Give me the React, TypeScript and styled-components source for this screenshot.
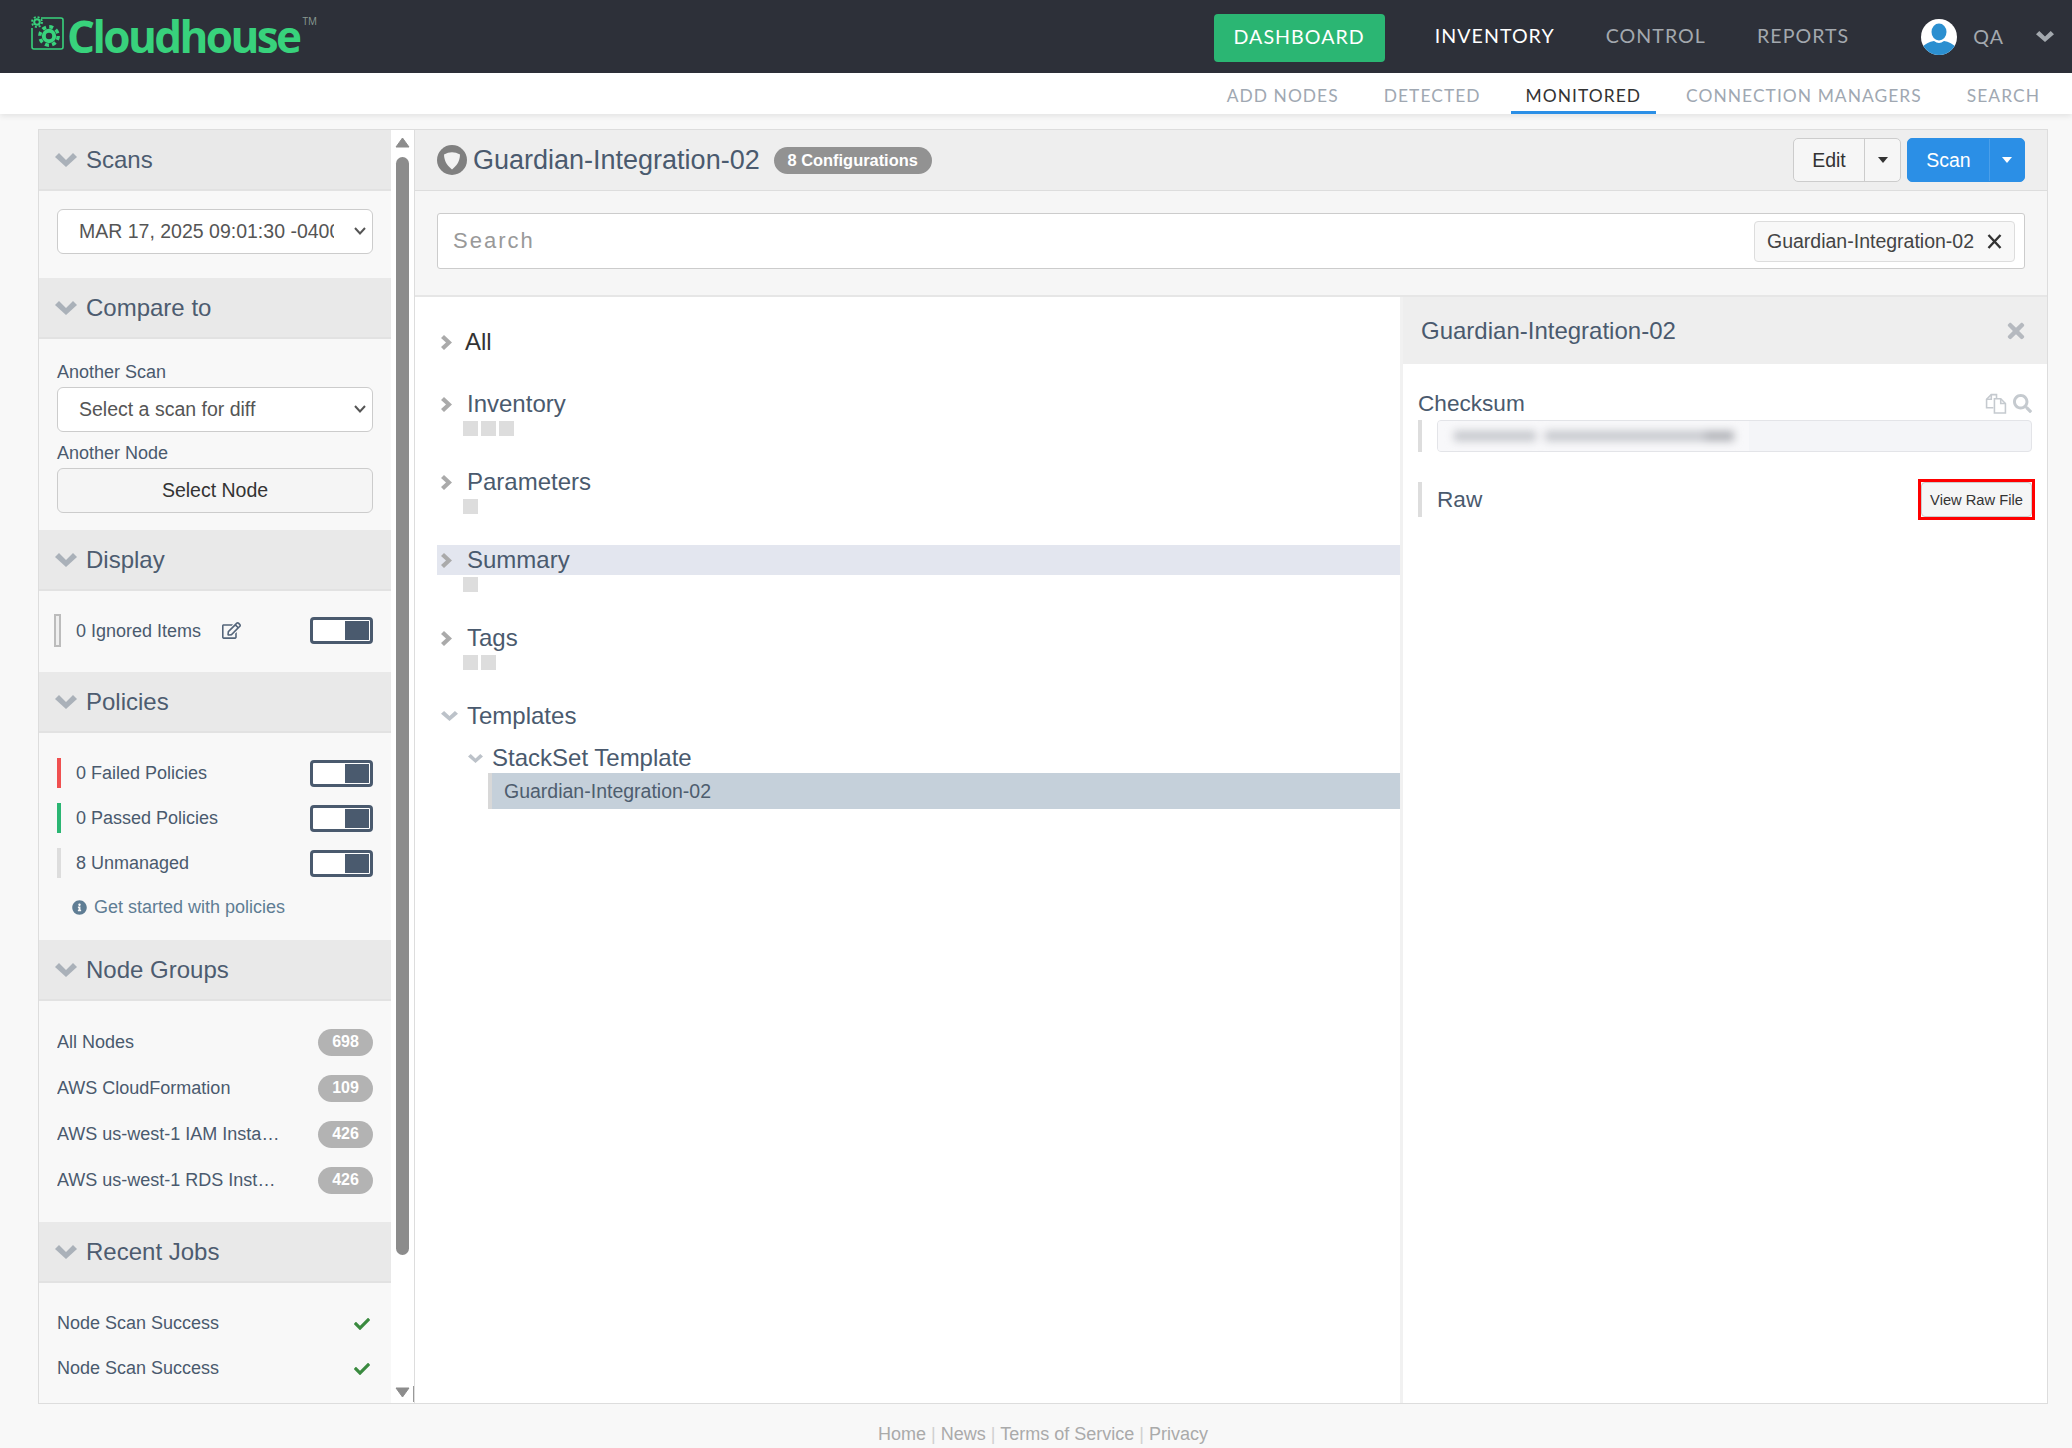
import React from 'react';
import styled, { createGlobalStyle } from 'styled-components';
import { FaCheck, FaTimes, FaRegEdit, FaInfoCircle, FaSearch } from 'react-icons/fa';

const Global = createGlobalStyle`
  html, body { margin: 0; padding: 0; background: #f8f8f8; overflow: hidden; }
  body { font-family: "Liberation Sans", Arial, sans-serif; color: #4a5a6e; }
  * { box-sizing: border-box; }
`;

const Page = styled.div`
  width: 2072px;
  height: 1448px;
  display: flex;
  flex-direction: column;
`;

const TopBar = styled.header`
  height: 73px;
  background: #2d3039;
  display: flex;
  align-items: center;
  padding: 0 18px 0 31px;
  flex: none;
`;

const Logo = styled.div`
  display: flex;
  align-items: flex-start;
  color: #38d27c;
  margin-top: -2px;
`;

const LogoWord = styled.span`
  font-family: "Open Sans", sans-serif;
  font-weight: 700;
  font-size: 44px;
  line-height: 46px;
  letter-spacing: -2.6px;
  margin-left: 3px;
`;

const LogoMark = styled.span`
  display: flex;
  margin-top: 3px;
`;

const LogoTm = styled.sup`
  font-family: "Open Sans", sans-serif;
  font-size: 10px;
  line-height: 12px;
  color: #8a9a92;
  margin: 2px 0 0 3px;
  vertical-align: baseline;
`;

const TopNav = styled.nav`
  margin-left: auto;
  display: flex;
  align-items: center;
  font-family: Lato, sans-serif;
  font-size: 19.6px;
  letter-spacing: 1.05px;
`;

const DashButton = styled.a`
  width: 171px;
  height: 48px;
  background: #2bb673;
  color: #fff;
  border-radius: 4px;
  display: flex;
  align-items: center;
  justify-content: center;
  margin: 2px 50px 0 0;
  padding-bottom: 2px;
`;

const TopLink = styled.a<{ $active?: boolean; $last?: boolean }>`
  color: ${p => (p.$active ? '#fff' : '#a3a8ae')};
  margin-right: ${p => (p.$last ? 0 : 51)}px;
  margin-bottom: 2px;
`;

const UserBox = styled.div`
  display: flex;
  align-items: center;
  margin-left: 72px;
  color: #a3a8ae;
`;

const UserName = styled.span`
  margin: 0 32px 0 16px;
`;

const SubBar = styled.div`
  height: 41px;
  background: #fff;
  box-shadow: 0 2px 6px rgba(0, 0, 0, 0.09);
  display: flex;
  justify-content: flex-end;
  gap: 15px;
  padding-right: 17px;
  flex: none;
  position: relative;
  font-family: Lato, sans-serif;
  font-size: 17.4px;
  letter-spacing: 1.05px;
`;

const SubTab = styled.a<{ $active?: boolean }>`
  padding: 0 15px;
  line-height: 46px;
  height: 41px;
  color: ${p => (p.$active ? '#333' : '#a0a8b2')};
  border-bottom: 3px solid ${p => (p.$active ? '#2b8fe6' : 'transparent')};
`;

const Frame = styled.div`
  margin: 15px 0 0 38px;
  width: 2010px;
  height: 1275px;
  border: 1px solid #ddd;
  display: flex;
  flex: none;
`;

const Sidebar = styled.aside`
  width: 352px;
  height: 100%;
  overflow: hidden;
  flex: none;
`;

const SectionHead = styled.div`
  height: 61px;
  background: #e9e9e9;
  border-bottom: 2px solid #e2e2e2;
  display: flex;
  align-items: center;
  padding-left: 16px;
  font-size: 24px;
  gap: 9px;
  color: #4d5c70;
`;

const SectionBody = styled.div<{ $top: number; $bottom?: number }>`
  padding: ${p => p.$top}px 18px ${p => p.$bottom || 0}px 18px;
`;

const SelectWrap = styled.div<{ $top?: number }>`
  position: relative;
  width: 316px;
  margin-top: ${p => p.$top || 0}px;
`;

const NativeSelect = styled.select`
  appearance: none;
  width: 316px;
  height: 45px;
  display: block;
  background: #fff;
  border: 1px solid #ccc;
  border-radius: 6px;
  padding: 0 38px 2px 21px;
  font-family: "Liberation Sans", Arial, sans-serif;
  font-size: 19.5px;
  color: #555;
  outline: none;
`;

const SelectArrow = styled.svg`
  position: absolute;
  right: 7px;
  top: 18px;
  pointer-events: none;
`;

const FieldLabel = styled.label<{ $top?: number }>`
  display: block;
  font-size: 18px;
  line-height: 24px;
  color: #4a5a6e;
  margin-top: ${p => p.$top || 0}px;
`;

const SelectNode = styled.button`
  display: block;
  width: 316px;
  height: 45px;
  margin-top: 3px;
  background: #f5f5f5;
  border: 1px solid #ccc;
  border-radius: 6px;
  font-family: "Liberation Sans", Arial, sans-serif;
  font-size: 19.5px;
  color: #333;
`;

const FilterRow = styled.div<{ $gap?: number }>`
  display: flex;
  align-items: center;
  height: 30px;
  margin-bottom: ${p => (p.$gap === undefined ? 15 : p.$gap)}px;
  font-size: 18px;
  color: #4a5a6e;
`;

const ColorBar = styled.span<{ $color: string }>`
  width: 4px;
  height: 30px;
  background: ${p => p.$color};
  margin-right: 15px;
  flex: none;
`;

const IgnoredRow = styled(FilterRow)`
  height: 33px;
  margin: 0 0 0 -3px;
`;

const IgnoredBar = styled.span`
  width: 7px;
  height: 33px;
  background: #efefef;
  border: 2px solid #bcbcbc;
  margin-right: 15px;
  flex: none;
`;

const IgnoredLabel = styled.span`
  margin-top: 1px;
`;

const EditIcon = styled(FaRegEdit)`
  margin-left: 21px;
  color: #54657a;
`;

const Toggle = styled.span`
  margin-left: auto;
  width: 63px;
  height: 27px;
  border: 3px solid #4a5a6e;
  border-radius: 4px;
  background: #fff;
  display: flex;
  justify-content: flex-end;
  padding: 1px;
  flex: none;
`;

const ToggleKnob = styled.span`
  width: 24px;
  height: 100%;
  background: #4a5a6e;
`;

const HelpLine = styled.div`
  display: flex;
  align-items: center;
  gap: 7px;
  margin: 17px 0 0 15px;
  height: 24px;
  font-size: 18px;
  color: #5f7d94;
`;

const GroupRow = styled.div`
  display: flex;
  align-items: center;
  justify-content: space-between;
  height: 46px;
  font-size: 18px;
  color: #4a5a6e;
`;

const GroupName = styled.span`
  display: block;
  width: 226px;
  white-space: nowrap;
  overflow: hidden;
  text-overflow: ellipsis;
`;

const CountBadge = styled.span`
  width: 55px;
  height: 27px;
  border-radius: 14px;
  background: #b3b3b3;
  color: #fff;
  font-weight: 700;
  font-size: 16px;
  display: flex;
  align-items: center;
  justify-content: center;
`;

const JobRow = styled.div`
  display: flex;
  align-items: center;
  justify-content: space-between;
  height: 45px;
  font-size: 18px;
  color: #4a5a6e;
  padding-right: 3px;
`;

const ScrollCol = styled.div`
  width: 23px;
  flex: none;
  background: #fff;
  display: flex;
  flex-direction: column;
  align-items: center;
  padding: 7px 0 5px;
  position: relative;
`;

const ScrollThumb = styled.div`
  width: 13px;
  margin: 9px 0 auto;
  height: 1098px;
  background: #8c8c8c;
  border-radius: 7px;
`;

const Tick = styled.span`
  position: absolute;
  right: 0;
  bottom: 1px;
  width: 1px;
  height: 16px;
  background: #999;
`;

const Content = styled.main`
  flex: 1;
  min-width: 0;
  border-left: 1px solid #ddd;
  display: flex;
  flex-direction: column;
  background: #fff;
`;

const ContentHead = styled.div`
  height: 61px;
  background: #eee;
  border-bottom: 1px solid #ddd;
  display: flex;
  align-items: center;
  padding: 0 22px;
  flex: none;
`;

const NodeTitle = styled.h1`
  margin: 0 0 0 6px;
  font-weight: 400;
  font-size: 27px;
  color: #4a5a6e;
`;

const ConfigBadge = styled.span`
  margin-left: 14px;
  height: 27px;
  width: 158px;
  border-radius: 14px;
  background: #929292;
  color: #fff;
  font-weight: 700;
  font-size: 16.4px;
  display: flex;
  align-items: center;
  justify-content: center;
`;

const ActionsGroup = styled.div`
  margin-left: auto;
  display: flex;
  gap: 6px;
`;

const SplitButton = styled.div<{ $primary?: boolean; $width: number; $main: number }>`
  width: ${p => p.$width}px;
  height: 44px;
  display: grid;
  grid-template-columns: ${p => p.$main}px 1fr;
  border-radius: 5px;
  overflow: hidden;
  font-size: 19.5px;
  background: ${p => (p.$primary ? '#2b8fe6' : '#f6f6f6')};
  color: ${p => (p.$primary ? '#fff' : '#333')};
  border: 1px solid ${p => (p.$primary ? '#2b8fe6' : '#ccc')};
`;

const SplitMain = styled.span`
  display: flex;
  align-items: center;
  justify-content: center;
`;

const SplitCaret = styled.span<{ $primary?: boolean }>`
  display: flex;
  align-items: center;
  justify-content: center;
  border-left: 1px solid ${p => (p.$primary ? '#4a9fea' : '#ccc')};
`;

const Caret = styled.span`
  width: 0;
  height: 0;
  border-left: 5px solid transparent;
  border-right: 5px solid transparent;
  border-top: 6px solid currentColor;
`;

const SearchArea = styled.div`
  height: 106px;
  background: #f6f6f6;
  border-bottom: 2px solid #e6e6e6;
  padding: 22px 22px 0;
  flex: none;
`;

const SearchBox = styled.div`
  height: 56px;
  background: #fff;
  border: 1px solid #ccc;
  border-radius: 3px;
  display: flex;
  align-items: center;
  padding: 0 9px 0 15px;
`;

const SearchPlaceholder = styled.span`
  font-size: 22px;
  letter-spacing: 2px;
  color: #999;
`;

const SearchTag = styled.span`
  margin-left: auto;
  width: 261px;
  height: 41px;
  background: #f8f8f8;
  border: 1px solid #ddd;
  border-radius: 4px;
  color: #444;
  font-size: 19.5px;
  display: flex;
  align-items: center;
  justify-content: space-between;
  padding: 0 12px;
`;

const Split = styled.div`
  flex: 1;
  display: flex;
  min-height: 0;
`;

const Tree = styled.div`
  width: 985px;
  flex: none;
  padding: 30px 0 0 22px;
`;

const TreeRow = styled.div<{ $hl?: boolean }>`
  height: 30px;
  display: flex;
  align-items: center;
  font-size: 24px;
  color: #4a5a6e;
  background: ${p => (p.$hl ? '#e3e6ef' : 'transparent')};
  padding-left: 4px;
`;

const AllRow = styled(TreeRow)`
  color: #333;
  margin-bottom: 32px;
`;

const TreeLabel = styled.span<{ $x: number }>`
  margin-left: ${p => p.$x}px;
`;

const TreeGroup = styled.div`
  margin-bottom: 31px;
`;

const Squares = styled.div`
  display: flex;
  gap: 3px;
  margin: 2px 0 0 26px;
`;

const Square = styled.span`
  width: 15px;
  height: 15px;
  background: #ddd;
`;

const SubRow = styled(TreeRow)`
  margin: 12px 0 0 27px;
`;

const SelectedRow = styled.div`
  margin-left: 51px;
  height: 36px;
  background: #c5d0da;
  border-left: 4px solid #d8d8d8;
  padding-left: 12px;
  display: flex;
  align-items: center;
  font-size: 19.5px;
  color: #4e5d6e;
`;

const Detail = styled.section`
  flex: 1;
  min-width: 0;
  border-left: 3px solid #f1f1f1;
`;

const DetailHead = styled.div`
  height: 67px;
  background: #eee;
  display: flex;
  align-items: center;
  justify-content: space-between;
  padding: 0 19px 0 18px;
  font-size: 24px;
  color: #4a5a6e;
`;

const DetailBody = styled.div`
  padding: 25px 15px 0;
`;

const CheckHead = styled.div`
  display: flex;
  align-items: center;
  height: 29px;
  font-size: 22.6px;
  color: #4a5a6e;
`;

const CheckIcons = styled.span`
  margin-left: auto;
  display: flex;
  align-items: center;
  gap: 6px;
  color: #c5cacf;
`;

const ValueRow = styled.div`
  margin-top: 2px;
  display: flex;
  border-left: 4px solid #ddd;
  padding-left: 15px;
  height: 32px;
`;

const ValueBox = styled.div`
  flex: 1;
  background: #f4f5f8;
  border: 1px solid #e3e4e8;
  border-radius: 4px;
  display: flex;
  overflow: hidden;
`;

const RedactedPatch = styled.div`
  width: 311px;
  background: #f8f8fa;
  display: flex;
  align-items: center;
  padding-left: 16px;
`;

const Redacted = styled.div`
  width: 292px;
  height: 10px;
  filter: blur(4px);
  background: linear-gradient(90deg, #c4c6cb 0 28%, transparent 28% 31%, #c4c6cb 31% 86%, #aeb0b5 86% 96%, transparent 96%);
`;

const RawRow = styled.div`
  margin-top: 30px;
  height: 35px;
  display: flex;
  align-items: center;
  justify-content: space-between;
  border-left: 4px solid #ddd;
  padding-left: 15px;
  font-size: 22.6px;
  color: #4a5a6e;
`;

const RawFrame = styled.div`
  border: 3px solid #f00;
  margin: -3px -3px -3px 0;
  display: flex;
`;

const RawButton = styled.button`
  width: 111px;
  height: 35px;
  padding: 0;
  background: #f5f5f5;
  border: 1px solid #ccc;
  border-radius: 4px;
  font-family: "Liberation Sans", Arial, sans-serif;
  font-size: 14.7px;
  color: #333;
`;

const Footer = styled.footer`
  margin-left: 38px;
  width: 2010px;
  text-align: center;
  font-size: 18px;
  line-height: 22px;
  padding-top: 19px;
  color: #aaa;
`;

const Pipe = styled.span`
  color: #d0d0d0;
`;

const LogoIcon = () => (
  <svg width="33" height="34" viewBox="0 0 33 34" fill="none">
    <path d="M10 2H30a2 2 0 0 1 2 2V31a2 2 0 0 1-2 2H3a2 2 0 0 1-2-2V12" stroke="#38d27c" strokeWidth="1.6" />
    <circle cx="6" cy="6" r="2.8" stroke="#38d27c" strokeWidth="2" />
    <circle cx="6" cy="6" r="5" stroke="#38d27c" strokeWidth="1.8" strokeDasharray="2 1.93" />
    <circle cx="18" cy="20" r="5.2" stroke="#38d27c" strokeWidth="4" />
    <circle cx="18" cy="20" r="9.2" stroke="#38d27c" strokeWidth="3.4" strokeDasharray="4 3.22" />
  </svg>
);

const NodeIcon = () => (
  <svg width="30" height="30" viewBox="0 0 30 30">
    <circle cx="15" cy="15" r="15" fill="#808080" />
    <path d="M7 9.5Q15 5 23 9.5C23 16 19.5 21 15 24.5C10.5 21 7 16 7 9.5Z" fill="#f2f2f2" />
  </svg>
);

const Avatar = () => (
  <svg width="36" height="36" viewBox="0 0 36 36">
    <defs>
      <clipPath id="avatar-clip"><circle cx="18" cy="18" r="18" /></clipPath>
    </defs>
    <g clipPath="url(#avatar-clip)">
      <rect width="36" height="36" fill="#fff" />
      <ellipse cx="18" cy="13" rx="7.5" ry="8.5" fill="#2b8fd0" />
      <path d="M0 36V29Q6 23 13 22Q18 26 23 22Q30 23 36 29V36Z" fill="#2b8fd0" />
    </g>
  </svg>
);

const CopyIcon = () => (
  <svg width="22" height="21" viewBox="0 0 21 20" fill="none" stroke="currentColor" strokeWidth="1.5">
    <path d="M8 14H1.5V6L6 1.5H11V5" />
    <path d="M6 1.5V6H1.5" />
    <path d="M9 5.5H15L19.5 10V19H9Z" />
    <path d="M15 5.5V10H19.5" />
  </svg>
);

const ChevronDown = ({ w, h, color }: { w: number; h: number; color: string }) => (
  <svg width={w} height={h} viewBox="0 0 22 14" fill={color} preserveAspectRatio="none">
    <path d="M0 4L4 0L11 7L18 0L22 4L11 14Z" />
  </svg>
);

const ChevronRight = () => (
  <svg width="11" height="15" viewBox="0 0 11 15" fill="#aaa">
    <path d="M0 3L3 0L11 7.5L3 15L0 12L5 7.5Z" />
  </svg>
);

const CloseThin = () => (
  <svg width="15" height="15" viewBox="0 0 15 15" stroke="#333" strokeWidth="2.4">
    <path d="M1.5 1L13.5 14M13.5 1L1.5 14" />
  </svg>
);

const Section = ({ title, children, top, bottom }: { title: string; children: React.ReactNode; top: number; bottom?: number }) => (
  <>
    <SectionHead>
      <ChevronDown w={22} h={14} color="#aab1b9" />
      {title}
    </SectionHead>
    <SectionBody $top={top} $bottom={bottom}>{children}</SectionBody>
  </>
);

const Switch = () => (
  <Toggle><ToggleKnob /></Toggle>
);

const Dropdown = ({ label, top }: { label: string; top?: number }) => (
  <SelectWrap $top={top}>
    <NativeSelect defaultValue="a">
      <option value="a">{label}</option>
    </NativeSelect>
    <SelectArrow width="12" height="8" viewBox="0 0 12 8" fill="none" stroke="#555" strokeWidth="2">
      <path d="M1 1L6 6.5L11 1" />
    </SelectArrow>
  </SelectWrap>
);

const treeGroups = [
  { name: 'Inventory', squares: 3 },
  { name: 'Parameters', squares: 1 },
  { name: 'Summary', squares: 1, hl: true },
  { name: 'Tags', squares: 2 },
];

const groups = [
  ['All Nodes', '698'],
  ['AWS CloudFormation', '109'],
  ['AWS us-west-1 IAM Instance Profiles', '426'],
  ['AWS us-west-1 RDS Instances', '426'],
];

export default function App() {
  return (
    <Page>
      <Global />
      <TopBar>
        <Logo>
          <LogoMark><LogoIcon /></LogoMark>
          <LogoWord>Cloudhouse</LogoWord>
          <LogoTm>TM</LogoTm>
        </Logo>
        <TopNav>
          <DashButton>DASHBOARD</DashButton>
          <TopLink $active>INVENTORY</TopLink>
          <TopLink>CONTROL</TopLink>
          <TopLink $last>REPORTS</TopLink>
          <UserBox>
            <Avatar />
            <UserName>QA</UserName>
            <ChevronDown w={18} h={11} color="#a3a8ae" />
          </UserBox>
        </TopNav>
      </TopBar>
      <SubBar>
        <SubTab>ADD NODES</SubTab>
        <SubTab>DETECTED</SubTab>
        <SubTab $active>MONITORED</SubTab>
        <SubTab>CONNECTION MANAGERS</SubTab>
        <SubTab>SEARCH</SubTab>
      </SubBar>
      <Frame>
        <Sidebar>
          <Section title="Scans" top={18} bottom={24}>
            <Dropdown label="MAR 17, 2025 09:01:30 -0400" />
          </Section>
          <Section title="Compare to" top={21} bottom={17}>
            <FieldLabel>Another Scan</FieldLabel>
            <Dropdown label="Select a scan for diff" top={3} />
            <FieldLabel $top={9}>Another Node</FieldLabel>
            <SelectNode>Select Node</SelectNode>
          </Section>
          <Section title="Display" top={23} bottom={25}>
            <IgnoredRow>
              <IgnoredBar />
              <IgnoredLabel>0 Ignored Items</IgnoredLabel>
              <EditIcon size={19} />
              <Switch />
            </IgnoredRow>
          </Section>
          <Section title="Policies" top={25} bottom={21}>
            <FilterRow><ColorBar $color="#f05050" />0 Failed Policies<Switch /></FilterRow>
            <FilterRow><ColorBar $color="#2bb673" />0 Passed Policies<Switch /></FilterRow>
            <FilterRow $gap={0}><ColorBar $color="#ddd" />8 Unmanaged<Switch /></FilterRow>
            <HelpLine><FaInfoCircle size={15} color="#5f7d94" />Get started with policies</HelpLine>
          </Section>
          <Section title="Node Groups" top={18} bottom={19}>
            {groups.map(([name, count]) => (
              <GroupRow key={name}>
                <GroupName>{name}</GroupName>
                <CountBadge>{count}</CountBadge>
              </GroupRow>
            ))}
          </Section>
          <Section title="Recent Jobs" top={18}>
            <JobRow>Node Scan Success<FaCheck size={16} color="#3a8a3f" /></JobRow>
            <JobRow>Node Scan Success<FaCheck size={16} color="#3a8a3f" /></JobRow>
          </Section>
        </Sidebar>
        <ScrollCol>
          <svg width="15" height="11" viewBox="0 0 15 11"><path d="M7.5 1L14 10H1Z" fill="#8c8c8c" stroke="#8c8c8c" strokeLinejoin="round" /></svg>
          <ScrollThumb />
          <svg width="15" height="11" viewBox="0 0 15 11"><path d="M7.5 10L14 1H1Z" fill="#8c8c8c" stroke="#8c8c8c" strokeLinejoin="round" /></svg>
          <Tick />
        </ScrollCol>
        <Content>
          <ContentHead>
            <NodeIcon />
            <NodeTitle>Guardian-Integration-02</NodeTitle>
            <ConfigBadge>8 Configurations</ConfigBadge>
            <ActionsGroup>
              <SplitButton $width={108} $main={70}>
                <SplitMain>Edit</SplitMain>
                <SplitCaret><Caret /></SplitCaret>
              </SplitButton>
              <SplitButton $primary $width={118} $main={81}>
                <SplitMain>Scan</SplitMain>
                <SplitCaret $primary><Caret /></SplitCaret>
              </SplitButton>
            </ActionsGroup>
          </ContentHead>
          <SearchArea>
            <SearchBox>
              <SearchPlaceholder>Search</SearchPlaceholder>
              <SearchTag>
                Guardian-Integration-02
                <CloseThin />
              </SearchTag>
            </SearchBox>
          </SearchArea>
          <Split>
            <Tree>
              <AllRow>
                <ChevronRight />
                <TreeLabel $x={13}>All</TreeLabel>
              </AllRow>
              {treeGroups.map(g => (
                <TreeGroup key={g.name}>
                  <TreeRow $hl={g.hl}>
                    <ChevronRight />
                    <TreeLabel $x={15}>{g.name}</TreeLabel>
                  </TreeRow>
                  <Squares>
                    {Array.from({ length: g.squares }).map((_, i) => <Square key={i} />)}
                  </Squares>
                </TreeGroup>
              ))}
              <TreeRow>
                <ChevronDown w={17} h={10} color="#bcc2c9" />
                <TreeLabel $x={9}>Templates</TreeLabel>
              </TreeRow>
              <SubRow>
                <ChevronDown w={15} h={9} color="#bcc2c9" />
                <TreeLabel $x={9}>StackSet Template</TreeLabel>
              </SubRow>
              <SelectedRow>Guardian-Integration-02</SelectedRow>
            </Tree>
            <Detail>
              <DetailHead>
                Guardian-Integration-02
                <FaTimes size={24} color="#b5b9bf" />
              </DetailHead>
              <DetailBody>
                <CheckHead>
                  Checksum
                  <CheckIcons>
                    <CopyIcon />
                    <FaSearch size={19} />
                  </CheckIcons>
                </CheckHead>
                <ValueRow>
                  <ValueBox>
                    <RedactedPatch><Redacted /></RedactedPatch>
                  </ValueBox>
                </ValueRow>
                <RawRow>
                  Raw
                  <RawFrame>
                    <RawButton>View Raw File</RawButton>
                  </RawFrame>
                </RawRow>
              </DetailBody>
            </Detail>
          </Split>
        </Content>
      </Frame>
      <Footer>
        Home <Pipe>|</Pipe> News <Pipe>|</Pipe> Terms of Service <Pipe>|</Pipe> Privacy
      </Footer>
    </Page>
  );
}
